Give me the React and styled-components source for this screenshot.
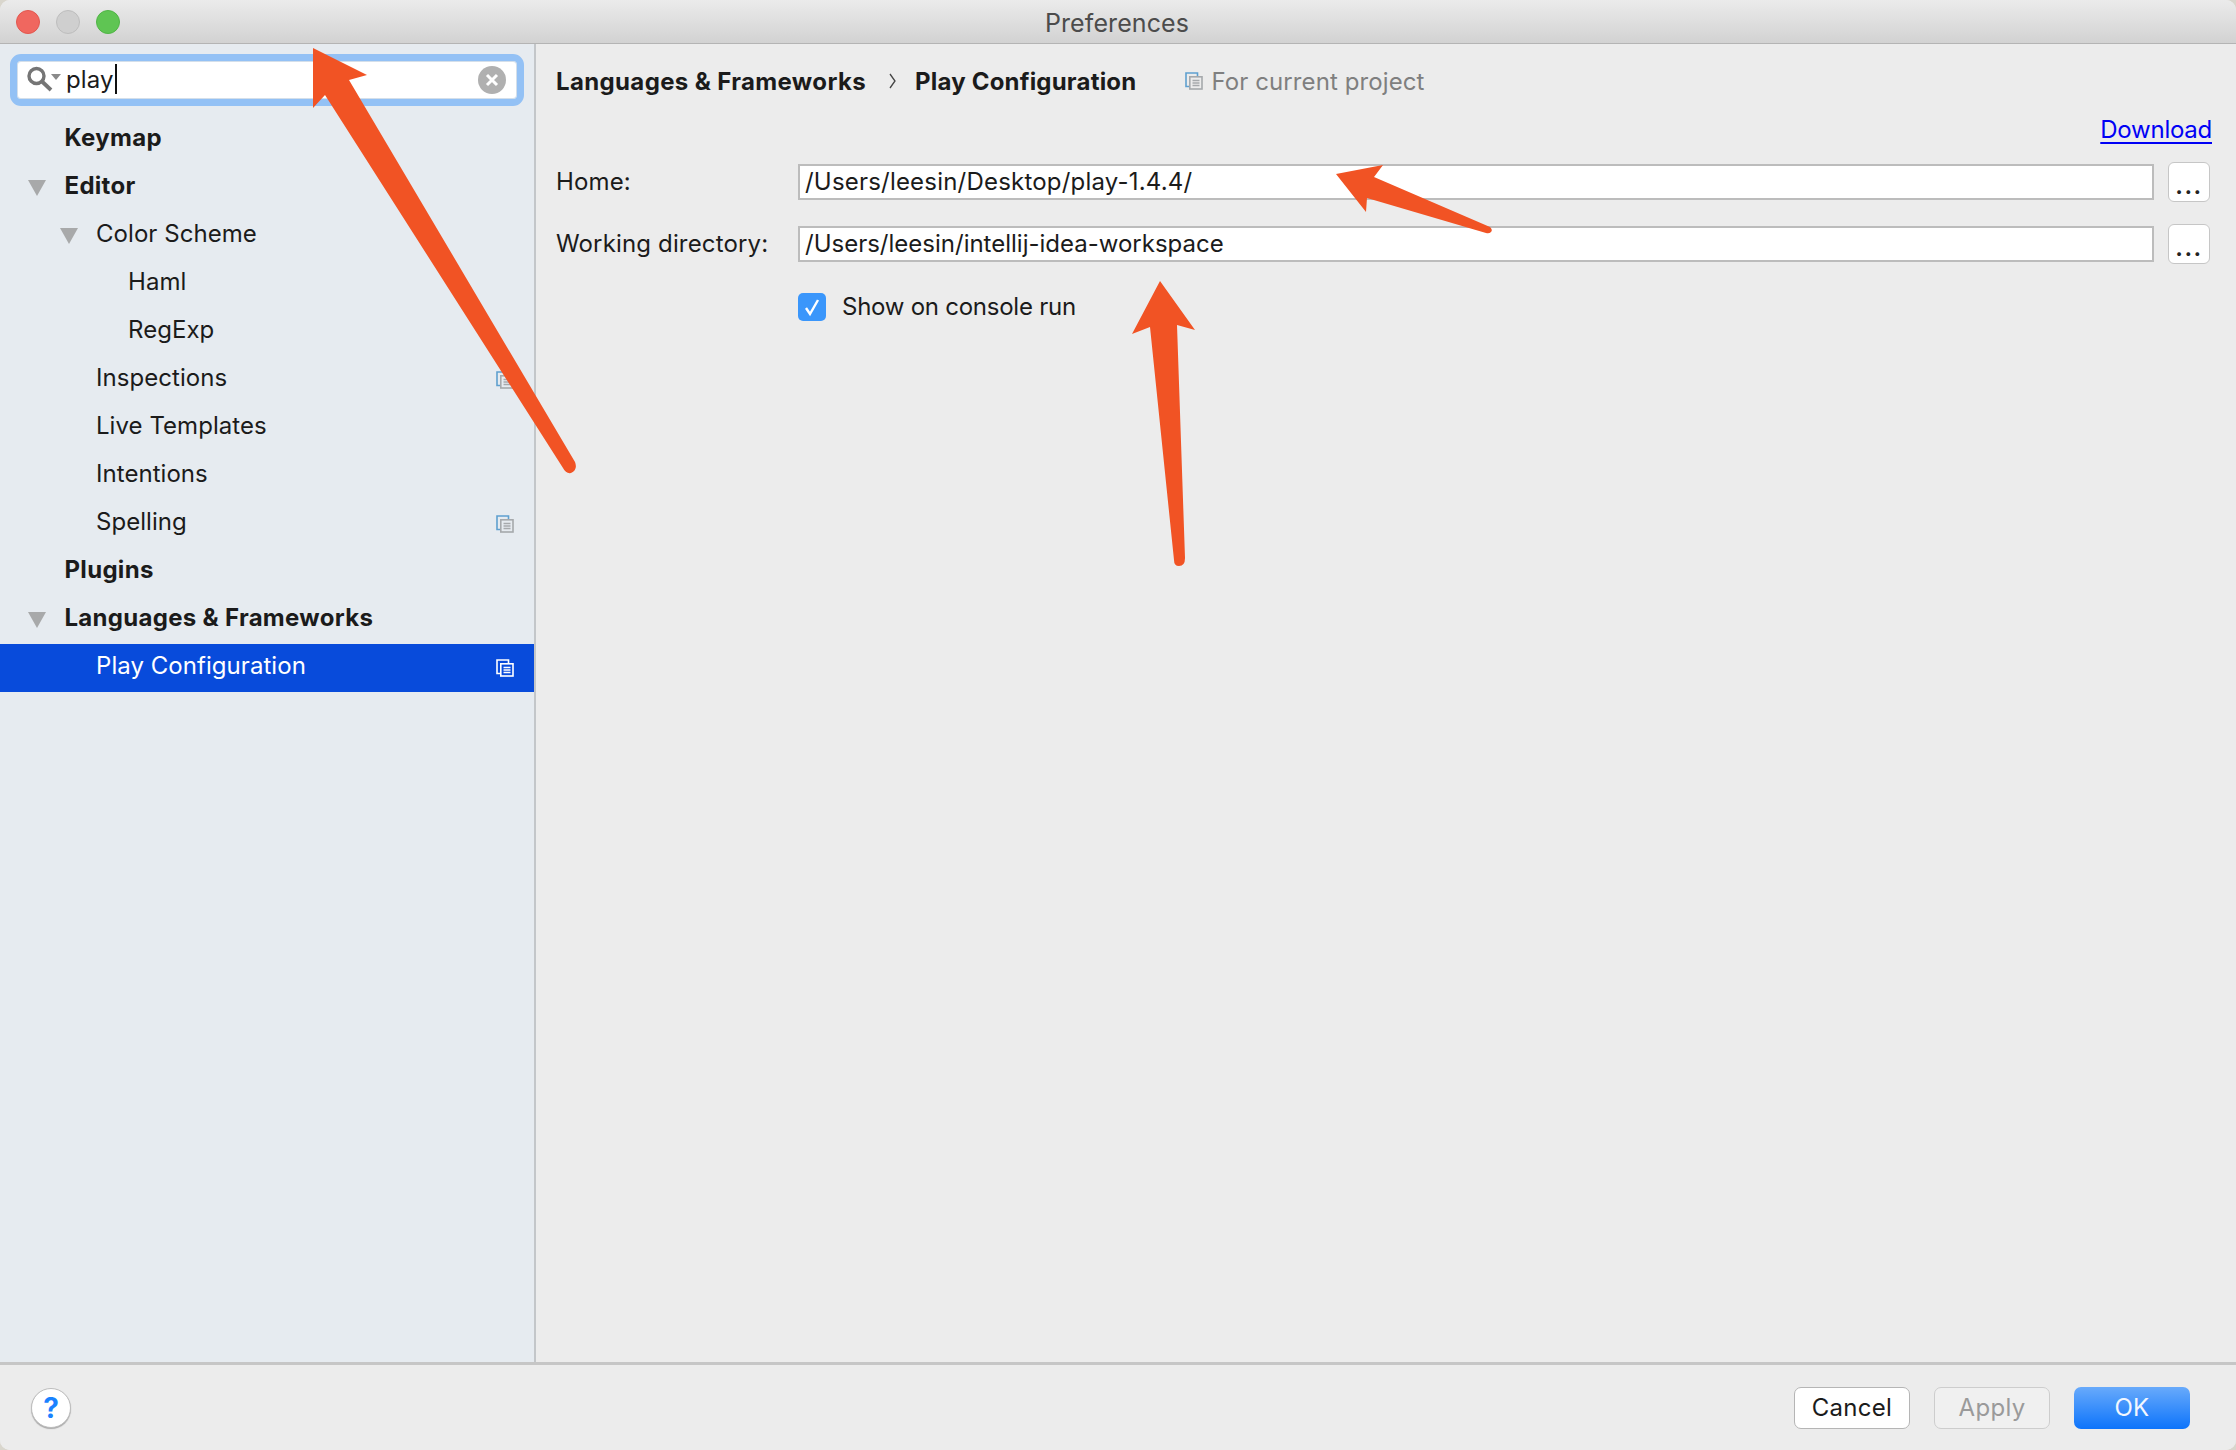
import React from "react";
import styled, { createGlobalStyle } from "styled-components";

const Global = createGlobalStyle`
  html, body { margin: 0; padding: 0; background: #d9d6cd; }
  body { font-family: Inter, "Liberation Sans", sans-serif; }
  * { box-sizing: border-box; }
`;

const Win = styled.div`
  position: relative; width: 2236px; height: 1450px; display: flex; flex-direction: column;
  background: #ececec; border-radius: 10px; overflow: hidden; color: #1b1b1b;
  font-size: 24px; letter-spacing: 0.1px;
`;
const TitleBar = styled.header`
  height: 44px; flex: none; position: relative; display: flex; align-items: center; justify-content: center;
  background: linear-gradient(#ebebeb, #d2d2d2); border-bottom: 1px solid #b4b4b4;
`;
const Lights = styled.div`
  position: absolute; left: 16px; top: 10px; display: flex; gap: 16px;
`;
const Light = styled.span`
  width: 24px; height: 24px; border-radius: 50%; background: ${p => p.$c}; border: 1px solid ${p => p.$b};
`;
const Title = styled.div`
  color: #4c4c4c; font-size: 25px; margin-top: 2px; margin-left: -2px;
`;
const Main = styled.div`
  flex: 1; display: flex; min-height: 0;
`;
const Sidebar = styled.aside`
  width: 536px; flex: none; background: #e6ebf0; border-right: 2px solid #c3c6c9; padding-top: 10px;
`;
const SearchRing = styled.div`
  margin: 0 10px 10px 10px; height: 52px; border: 7px solid #93c1f5; border-radius: 11px; background: #fff;
  display: flex; align-items: center; padding: 0 11px 0 10px; box-shadow: inset 0 0 0 1px #d4dfea;
`;
const SearchText = styled.span`
  margin-left: 4px; margin-top: -2px; font-size: 24px; color: #1b1b1b; flex: 1; display: flex; align-items: center;
`;
const Caret = styled.span`
  display: inline-block; width: 2px; height: 30px; background: #111; margin-left: 1px;
`;
const Row = styled.div`
  height: 48px; display: flex; align-items: center; padding-left: ${p => p.$indent - 37}px; padding-right: 20px;
  padding-bottom: 6px;
  background: ${p => (p.$selected ? "#084bdb" : "transparent")};
  color: ${p => (p.$selected ? "#fff" : "#1b1b1b")};
  font-weight: ${p => (p.$bold ? 700 : 400)};
  letter-spacing: ${p => (p.$bold ? "0.3px" : "0.05px")};
`;
const Slot = styled.span`
  width: 37px; flex: none; display: flex;
`;
const Triangle = styled.span`
  width: 0; height: 0; border-left: 9px solid transparent; border-right: 9px solid transparent;
  border-top: 16px solid #a8a9aa; margin-top: 5px; margin-left: ${p => p.$nudge || 0}px;
`;
const RowLabel = styled.span`
  flex: 1;
`;
const RowIcon = styled.span`
  display: flex; margin-top: 5px;
`;
const Content = styled.section`
  flex: 1; padding: 19px 24px 0 20px; display: flex; flex-direction: column;
`;
const Crumbs = styled.div`
  height: 36px; display: flex; align-items: center; font-weight: 700; letter-spacing: 0.36px;
`;
const CrumbTail = styled.span`
  letter-spacing: 0.2px;
`;
const Chevron = styled.svg`
  margin: 0 19px 0 23px; flex: none;
`;
const Scope = styled.span`
  margin-left: 49px; display: flex; align-items: center; gap: 8px; font-weight: 400; color: #7f7f7f; letter-spacing: 0.1px;
`;
const LinkRow = styled.div`
  margin-top: 16px; height: 30px; display: flex; justify-content: flex-end;
`;
const DownloadLink = styled.a`
  color: #0000f5; text-decoration: underline; text-decoration-thickness: 2px; text-underline-offset: 4px; line-height: 30px;
  letter-spacing: -0.25px;
`;
const Form = styled.div`
  margin-top: 17px; padding-right: 2px; display: grid; grid-template-columns: 228px 1fr 42px;
  column-gap: 14px; row-gap: 22px; align-items: center;
`;
const Label = styled.label`
  margin-right: -14px; padding-bottom: 2px; letter-spacing: 0.15px;
`;
const Field = styled.div`
  height: 36px; border: 2px solid #bcbcbc; background: #fff; display: flex; align-items: center; padding: 0 0 2px 5px;
  letter-spacing: ${p => p.$tracking}px;
`;
const Browse = styled.button`
  height: 40px; width: 42px; padding: 6px 0 0 0; border: 1.5px solid #c6c6c6; border-radius: 6px; background: #fff;
  font: inherit; font-weight: 600; letter-spacing: 1.5px; color: #222; display: flex; align-items: center; justify-content: center;
`;
const CheckRow = styled.div`
  grid-column: 2 / 4; display: flex; align-items: center; gap: 16px; margin-top: 6px; letter-spacing: -0.25px;
`;
const CheckBox = styled.span`
  width: 28px; height: 28px; border-radius: 5px; background: #3a96fb; display: flex; align-items: center; justify-content: center;
`;
const Footer = styled.footer`
  height: 88px; flex: none; border-top: 3px solid #c6c6c6; display: flex; align-items: center;
  padding: 0 46px 0 31px; gap: 24px; background: #ececec;
`;
const Help = styled.button`
  width: 40px; height: 40px; border-radius: 50%; background: #fff; border: 1px solid #bdbdbd; padding: 0;
  box-shadow: 0 1px 1px #a9a9a9; font: 700 28px Inter, sans-serif; color: #1a82ff; margin-right: auto;
`;
const Action = styled.button`
  width: 116px; height: 42px; border-radius: 7px; font: inherit; letter-spacing: 0.3px; padding: 0;
  background: ${p => (p.$kind === "primary" ? "linear-gradient(#68aafb, #0d74fb)" : p.$kind === "off" ? "#f0f0f0" : "#fff")};
  color: ${p => (p.$kind === "primary" ? "#f2f7ff" : p.$kind === "off" ? "#9a9a9a" : "#1b1b1b")};
  border: ${p => (p.$kind === "primary" ? "none" : p.$kind === "off" ? "1px solid #cdcdcd" : "1px solid #b5b5b5")};
`;
const Overlay = styled.svg`
  position: absolute; left: 0; top: 0; pointer-events: none;
`;

const ProjectIcon = ({ light }) => (
  <svg width="18" height="18" viewBox="0 0 18 18" fill="none" style={{ flex: "none" }}>
    <path d="M4.5 14.5H1V1h11.5v3" stroke={light ? "#fff" : "#5fa0cf"} strokeWidth="1.6" />
    <rect x="4.8" y="4.8" width="12.2" height="12.2" stroke={light ? "#fff" : "#a6a9ac"} strokeWidth="1.6" />
    <path d="M7.5 8.5h7M7.5 11h7M7.5 13.5h7" stroke={light ? "#fff" : "#a6a9ac"} strokeWidth="1.4" />
  </svg>
);

const items = [
  { t: "Keymap", x: 64.5, b: 1 },
  { t: "Editor", x: 64.5, b: 1, o: 1 },
  { t: "Color Scheme", x: 96, o: 1, n: 1 },
  { t: "Haml", x: 128 },
  { t: "RegExp", x: 128 },
  { t: "Inspections", x: 96, i: 1 },
  { t: "Live Templates", x: 96 },
  { t: "Intentions", x: 96 },
  { t: "Spelling", x: 96, i: 1 },
  { t: "Plugins", x: 64.5, b: 1 },
  { t: "Languages & Frameworks", x: 64.5, b: 1, o: 1 },
  { t: "Play Configuration", x: 96, i: 1, s: 1 },
];

export default function App() {
  return (
    <Win>
      <Global />
      <TitleBar>
        <Lights>
          <Light $c="#f0675f" $b="#e2574f" />
          <Light $c="#cfcfcf" $b="#bdbdbd" />
          <Light $c="#5fc553" $b="#50b446" />
        </Lights>
        <Title>Preferences</Title>
      </TitleBar>
      <Main>
        <Sidebar>
          <SearchRing>
            <svg width="35" height="28" viewBox="0 0 35 28" fill="none" style={{ flex: "none" }}>
              <circle cx="9.5" cy="10" r="7.5" stroke="#757575" strokeWidth="3.4" />
              <path d="M15 15.5l9 8.5" stroke="#757575" strokeWidth="3.8" />
              <path d="M24 8h10l-5 6z" fill="#8a8a8a" />
            </svg>
            <SearchText>play<Caret /></SearchText>
            <svg width="28" height="28" viewBox="0 0 28 28" style={{ flex: "none" }}>
              <circle cx="14" cy="14" r="14" fill="#b0b0b0" />
              <path d="M9 9l10 10M19 9L9 19" stroke="#fff" strokeWidth="3" />
            </svg>
          </SearchRing>
          {items.map(it => (
            <Row key={it.t} $indent={it.x} $bold={it.b} $selected={it.s}>
              <Slot>{it.o ? <Triangle $nudge={it.n} /> : null}</Slot>
              <RowLabel>{it.t}</RowLabel>
              {it.i ? <RowIcon><ProjectIcon light={it.s} /></RowIcon> : null}
            </Row>
          ))}
        </Sidebar>
        <Content>
          <Crumbs>
            Languages &amp; Frameworks
            <Chevron width="7" height="16" viewBox="0 0 7 16" fill="none">
              <path d="M1 1l5 7-5 7" stroke="#444" strokeWidth="1.3" />
            </Chevron>
            <CrumbTail>Play Configuration</CrumbTail>
            <Scope><ProjectIcon />For current project</Scope>
          </Crumbs>
          <LinkRow><DownloadLink href="#">Download</DownloadLink></LinkRow>
          <Form>
            <Label>Home:</Label>
            <Field $tracking={0.2}>/Users/leesin/Desktop/play-1.4.4/</Field>
            <Browse>...</Browse>
            <Label>Working directory:</Label>
            <Field $tracking={0}>/Users/leesin/intellij-idea-workspace</Field>
            <Browse>...</Browse>
            <CheckRow>
              <CheckBox>
                <svg width="18" height="20" viewBox="0 0 18 20" fill="none">
                  <path d="M3 11l4 6L15 3" stroke="#fff" strokeWidth="2.4" />
                </svg>
              </CheckBox>
              Show on console run
            </CheckRow>
          </Form>
        </Content>
      </Main>
      <Footer>
        <Help>?</Help>
        <Action>Cancel</Action>
        <Action $kind="off">Apply</Action>
        <Action $kind="primary">OK</Action>
      </Footer>
      <Overlay width="2236" height="1450" viewBox="0 0 2236 1450">
        <g fill="#f15324">
          <path d="M313 48L367 75L349 80L575 462Q578 470 571 473Q566 474 563 468L325 95L313 108Z" />
          <path d="M1336 174L1383 165L1374 177L1490 227Q1493 230 1491 232Q1489 234 1486 233L1367 198L1366 212Z" />
          <path d="M1160 281L1195 330L1177 325L1185 558Q1185 566 1179 566Q1174 566 1174 560L1150 327L1132 334Z" />
        </g>
      </Overlay>
    </Win>
  );
}
